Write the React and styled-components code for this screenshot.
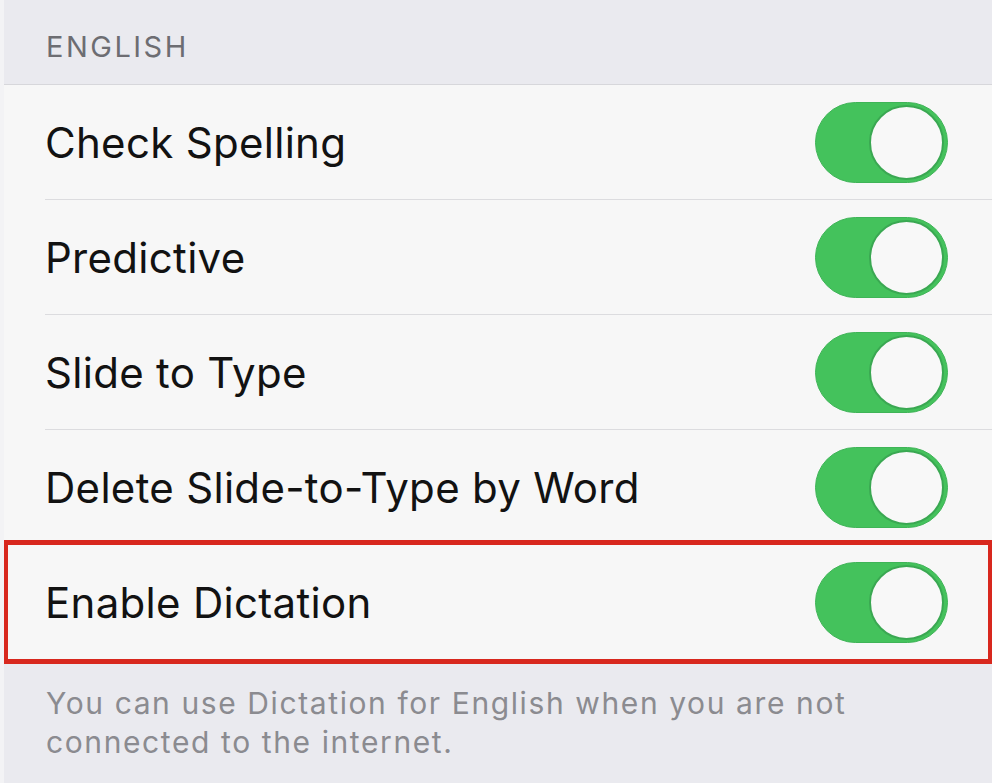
import React from "react";
import styled, { createGlobalStyle } from "styled-components";

const GlobalStyle = createGlobalStyle`
  html, body {
    margin: 0;
    padding: 0;
    background: #f3f3f5;
  }
  body {
    font-family: "Inter", "Liberation Sans", sans-serif;
    -webkit-font-smoothing: antialiased;
  }
`;

const Screen = styled.div`
  width: 988px;
  height: 783px;
  margin-left: 4px;
  background: #eaeaef;
  display: flex;
  flex-direction: column;
  overflow: hidden;
`;

const SectionHeader = styled.div`
  height: 85px;
  box-sizing: border-box;
  padding: 30px 0 0 42px;
  border-bottom: 1px solid #d7d7db;
  font-size: 29px;
  line-height: 34px;
  color: #6d6d72;
  letter-spacing: 2.5px;
`;

const List = styled.div`
  display: flex;
  flex-direction: column;
  background: #f7f7f7;
`;

const Row = styled.div`
  position: relative;
  height: 115px;
  box-sizing: border-box;
  padding: 0 44px 0 41px;
  display: flex;
  align-items: center;
  justify-content: space-between;

  &::after {
    content: "";
    display: ${(p) => (p.$last ? "none" : "block")};
    position: absolute;
    left: 41px;
    right: 0;
    bottom: 0;
    height: 1px;
    background: #dcdcdf;
  }

  &::before {
    content: "";
    display: ${(p) => (p.$highlighted ? "block" : "none")};
    position: absolute;
    top: -5px;
    bottom: -4px;
    left: -1px;
    right: -1px;
    border: 5px solid #d8281e;
    pointer-events: none;
  }
`;

const Label = styled.span`
  font-size: 42px;
  line-height: 50px;
  color: #121212;
  letter-spacing: 0.3px;
`;

const Track = styled.div`
  width: 133px;
  height: 81px;
  box-sizing: border-box;
  padding: 3px;
  border-radius: 41px;
  background: ${(p) => (p.$on ? "#44c25c" : "#e4e4e6")};
  border: 1px solid ${(p) => (p.$on ? "#3fb457" : "#d8d8da")};
  display: flex;
  justify-content: ${(p) => (p.$on ? "flex-end" : "flex-start")};
  align-items: center;
`;

const Knob = styled.div`
  width: 75px;
  height: 75px;
  box-sizing: border-box;
  border-radius: 50%;
  background: #f8f8f8;
  border: 2px solid #3aa852;
`;

const Footer = styled.p`
  margin: 0;
  padding: 24px 20px 0 42px;
  font-size: 30px;
  line-height: 39px;
  color: #8b8b90;
  letter-spacing: 1.6px;
  white-space: nowrap;
`;

const Switch = ({ on = true }) => (
  <Track $on={on}>
    <Knob />
  </Track>
);

const settings = [
  "Check Spelling",
  "Predictive",
  "Slide to Type",
  "Delete Slide-to-Type by Word",
  "Enable Dictation",
];

export default function App() {
  return (
    <>
      <GlobalStyle />
      <Screen>
        <SectionHeader>ENGLISH</SectionHeader>
        <List>
          {settings.map((label, i) => {
            const last = i === settings.length - 1;
            return (
              <Row key={label} $last={last} $highlighted={last}>
                <Label>{label}</Label>
                <Switch on />
              </Row>
            );
          })}
        </List>
        <Footer>
          You can use Dictation for English when you are not
          <br />
          connected to the internet.
        </Footer>
      </Screen>
    </>
  );
}
